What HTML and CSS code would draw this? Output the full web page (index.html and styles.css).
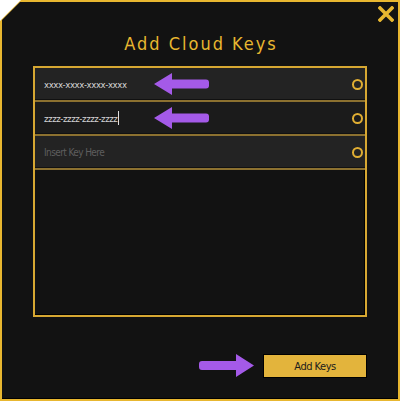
FILE: index.html
```html
<!DOCTYPE html>
<html>
<head>
<meta charset="utf-8">
<link rel="stylesheet" href="styles.css">
</head>
<body>
<div class="frame">
  <div class="window">
    <button class="close" aria-label="Close">
      <svg width="16" height="16" viewBox="0 0 16 16"><path d="M2 2 L14 14 M14 2 L2 14" stroke="#e8b730" stroke-width="3.6" stroke-linecap="square"/></svg>
    </button>
    <h1 class="title">Add Cloud Keys</h1>
    <div class="panel">
      <div class="row">
        <span class="key">xxxx-xxxx-xxxx-xxxx</span>
        <span class="dot"></span>
      </div>
      <div class="row row-active">
        <span class="key">zzzz-zzzz-zzzz-zzzz<span class="caret"></span></span>
        <span class="dot"></span>
      </div>
      <div class="row">
        <span class="key placeholder">Insert Key Here</span>
        <span class="dot"></span>
      </div>
    </div>
    <div class="actions">
      <button class="add">Add Keys</button>
    </div>
    <svg class="arrow arrow-1" width="55" height="22" viewBox="0 0 55 22"><path d="M0 11 L18 0 L18 6.5 L52 6.5 Q55 6.5 55 9.5 L55 12.5 Q55 15.5 52 15.5 L18 15.5 L18 22 Z" fill="#a45ae8"/></svg>
    <svg class="arrow arrow-2" width="55" height="22" viewBox="0 0 55 22"><path d="M0 11 L18 0 L18 6.5 L52 6.5 Q55 6.5 55 9.5 L55 12.5 Q55 15.5 52 15.5 L18 15.5 L18 22 Z" fill="#a45ae8"/></svg>
    <svg class="arrow arrow-3" width="55" height="23" viewBox="0 0 55 23"><path d="M55 11.5 L37 0 L37 7 L3 7 Q0 7 0 10 L0 13 Q0 16 3 16 L37 16 L37 23 Z" fill="#a45ae8"/></svg>
  </div>
</div>
</body>
</html>
```
FILE: styles.css
```css
html, body {
  margin: 0;
  padding: 0;
  background: #ffffff;
}
.frame {
  width: 400px;
  height: 401px;
  box-sizing: border-box;
  padding: 2px 2px 2px 2px;
  background: #e8b730;
  clip-path: polygon(21px 0, 100% 0, 100% 100%, 0 100%, 0 21px);
}
.window {
  position: relative;
  height: 100%;
  box-sizing: border-box;
  background: #121212;
  clip-path: polygon(18px 0, 100% 0, 100% 100%, 0 100%, 0 18px);
  padding: 30px 31px 0 31px;
  font-family: "DejaVu Sans Condensed", "DejaVu Sans", sans-serif;
  font-stretch: condensed;
  border-bottom: 1px solid #000;
}
.close {
  position: absolute;
  top: 4px;
  right: 4px;
  width: 16px;
  height: 16px;
  padding: 0;
  border: 0;
  background: none;
  display: block;
}
.close svg { display: block; }
.title {
  margin: 0 0 10px 0;
  height: 24px;
  line-height: 24px;
  text-align: center;
  font-size: 18px;
  font-weight: normal;
  letter-spacing: 2px;
  color: #e8b730;
  padding-left: 2px;
}
.panel {
  height: 251px;
  box-sizing: border-box;
  border: 2px solid #d6a732;
  box-shadow: inset -1px -1px 0 #000;
  background: #121212;
}
.row {
  height: 32px;
  display: flex;
  align-items: center;
  justify-content: space-between;
  padding: 0 2px 0 9px;
  background: #232323;
  border-bottom: 2px solid #8c7130;
  box-shadow: inset 0 -1px 0 #111;
}
.row-active {
  background: #1b1b1b;
}
.key {
  font-size: 9.5px;
  color: #d6d6d6;
  display: flex;
  align-items: center;
  letter-spacing: -0.4px;
}
.placeholder {
  color: #5e5e5e;
  font-size: 10px;
  letter-spacing: -0.6px;
}
.caret {
  display: inline-block;
  width: 1px;
  height: 14px;
  background: #e0e0e0;
  margin-left: 1px;
}
.dot {
  width: 7px;
  height: 7px;
  border: 2px solid #e0ae33;
  border-radius: 50%;
}
.actions {
  display: flex;
  justify-content: flex-end;
  margin-top: 37px;
}
.add {
  width: 104px;
  height: 24px;
  box-sizing: border-box;
  background: #e3b43c;
  border: 1px solid #000;
  font-family: "DejaVu Sans Condensed", "DejaVu Sans", sans-serif;
  font-stretch: condensed;
  font-size: 11px;
  color: #1c1c1c;
  padding: 0;
  letter-spacing: -0.5px;
}
.arrow {
  position: absolute;
  display: block;
}
.arrow-1 { left: 152px; top: 71px; }
.arrow-2 { left: 152px; top: 105px; }
.arrow-3 { left: 197px; top: 352px; }
```
